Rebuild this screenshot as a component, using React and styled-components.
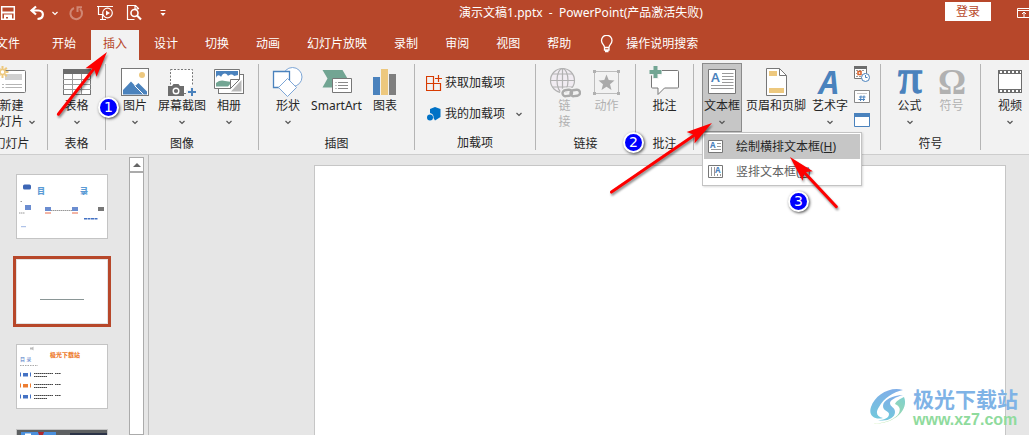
import React, { useState } from "react";
import styled, { createGlobalStyle, css } from "styled-components";

const brand = "#b7472a";
const blue = "#4a82bd";
const green = "#72a593";
const sand = "#edc87e";
const grey = "#6d6d6d";
const faded = "#b1b1b1";

const GlobalStyle = createGlobalStyle`
  * {
    box-sizing: border-box;
  }
  body {
    margin: 0;
    overflow: hidden;
    font-family: "Noto Sans", "Noto Sans CJK SC", sans-serif;
    font-size: 12px;
    line-height: 16px;
    color: #262626;
  }
  button {
    font: inherit;
    color: inherit;
    border: 0;
    padding: 0;
    background: none;
    cursor: pointer;
  }
  svg {
    display: block;
    flex: none;
  }
`;

const Page = styled.div`
  position: relative;
  display: flex;
  flex-direction: column;
  height: 100vh;
  overflow: hidden;
  background: #e6e6e6;
`;

const Header = styled.header`
  background: ${brand};
  color: #fff;
`;

const TitleBar = styled.div`
  display: flex;
  align-items: center;
  height: 26px;
`;

const QuickAccess = styled.div`
  display: flex;
  margin-left: -7px;
`;

const QuickButton = styled.button`
  display: flex;
  justify-content: ${({ $narrow }) => ($narrow ? "flex-start" : "center")};
  align-items: center;
  width: ${({ $narrow }) => ($narrow ? "10px" : "29px")};
  height: 24px;
  opacity: ${({ disabled }) => (disabled ? 0.35 : 1)};
`;

const DocTitle = styled.h1`
  flex: 1;
  margin: 0;
  padding-left: 40px;
  font-size: 12px;
  font-weight: 400;
  text-align: center;
  white-space: pre;
`;

const LoginButton = styled.button`
  width: 46px;
  height: 19px;
  margin: 0 26px 3px 0;
  background: #fff;
  color: ${brand};
`;

const WindowButton = styled.button`
  width: 12px;
  overflow: hidden;
`;

const Tabs = styled.nav`
  display: flex;
  gap: 3px;
  height: 34px;
  margin-left: -16px;
  padding-top: 4px;
`;

const Tab = styled.button`
  flex: none;
  padding: ${({ $file }) => ($file ? "0 17px 3px 12px" : "0 12px 3px")};
  ${({ $active }) =>
    $active &&
    css`
      background: #f2f2f2;
      color: ${brand};
    `}
`;

const TellMe = styled.button`
  display: flex;
  align-items: center;
  gap: 12px;
  margin-left: 14px;
  padding-bottom: 3px;
`;

const Ribbon = styled.div`
  display: flex;
  margin-left: -24px;
  padding: 3px 0;
  background: #f2f2f2;
  border-bottom: 1px solid #cdcdcd;
`;

const Group = styled.section`
  display: flex;
  flex-direction: column;
  flex: ${({ $width }) => ($width ? `0 0 ${$width}px` : "1 0 60px")};
  height: 88px;
  padding-left: ${({ $width }) => ($width ? 0 : "9px")};
  background: ${({ $width }) =>
    $width ? "linear-gradient(#b5b5b5, #b5b5b5) right 1px / 1px 86px no-repeat" : "none"};
`;

const GroupBody = styled.div`
  display: flex;
  justify-content: ${({ $start }) => ($start ? "flex-start" : "center")};
  gap: ${({ $gap }) => $gap || 1}px;
  height: 69px;
  padding-right: 1px;
`;

const GroupLabel = styled.div`
  padding-top: 4px;
  padding-right: 1px;
  text-align: center;
`;

const BigButton = styled.button`
  display: flex;
  flex-direction: column;
  align-items: center;
  flex: none;
  min-width: 40px;
  height: 69px;
  padding: 2px 1px 0;
  border: 1px solid transparent;
  white-space: nowrap;
  color: ${({ disabled }) => (disabled ? faded : "inherit")};
  ${({ $pressed }) =>
    $pressed &&
    css`
      background: #c6c6c6;
      border-color: #8b8b8b;
    `}
`;

const ButtonText = styled.span`
  display: flex;
  align-items: center;
  gap: 4px;
  height: 16px;
`;

const CommandList = styled.div`
  display: flex;
  flex-direction: column;
  align-items: flex-start;
  flex: 1;
  gap: 14px;
  padding: 11px 0 0 11px;
`;

const Command = styled.button`
  display: flex;
  align-items: center;
  gap: 3px;
  height: 17px;
`;

const CommandArrow = styled.span`
  padding-left: 7px;
`;

const IconColumn = styled.div`
  display: flex;
  flex-direction: column;
  gap: 7px;
  padding: 3px 2px 0;
`;

const IconButton = styled.button`
  height: 16px;
`;

const MenuAnchor = styled.div`
  position: relative;
`;

const Menu = styled.div`
  position: absolute;
  z-index: 2;
  top: 69px;
  left: 0;
  width: 160px;
  padding: 1px;
  background: #fff;
  border: 1px solid #c3c3c3;
  box-shadow: 1px 1px 2px rgba(0, 0, 0, 0.15);
`;

const MenuItem = styled.button`
  display: flex;
  align-items: center;
  gap: 12px;
  width: 100%;
  height: 25px;
  padding-left: 4px;
  white-space: nowrap;
  color: ${({ $active }) => ($active ? "#262626" : "#5f5f5f")};
  background: ${({ $active }) => ($active ? "#c6c6c6" : "#fff")};
`;

const Workspace = styled.main`
  display: flex;
  flex: 1;
  min-height: 0;
`;

const SlidePane = styled.aside`
  display: flex;
  width: 149px;
  padding-top: 2px;
  border-right: 1px solid #bdbdbd;
`;

const SlideList = styled.div`
  display: flex;
  flex-direction: column;
  flex: 1;
  gap: 20px;
  padding: 17px 0 0 16px;
  overflow: hidden;
`;

const Thumb = styled.button`
  flex: none;
  width: 92px;
  height: 65px;
  background: #fff;
  border: 1px solid ${({ $active }) => ($active ? "#e3e3e3" : "#c4c4c4")};
  outline: ${({ $active }) => ($active ? `3px solid ${brand}` : "none")};
`;

const ScrollTrack = styled.div`
  width: 15px;
  margin-right: 4px;
  background: #fff;
  border: 1px solid #ababab;
`;

const ScrollUp = styled.button`
  display: flex;
  justify-content: center;
  align-items: center;
  width: 100%;
  height: 15px;
  border-bottom: 2px solid #ababab;
`;

const Stage = styled.div`
  flex: 1;
  padding: 10px 23px 0 165px;
`;

const Slide = styled.div`
  height: 100%;
  background: #fff;
  border: 1px solid #c6c6c6;
  border-bottom: 0;
`;

const Arrows = styled.svg`
  position: absolute;
  z-index: 3;
  top: 0;
  left: 0;
  pointer-events: none;
  filter: drop-shadow(1px 2px 1px rgba(0, 0, 0, 0.45));
`;

const Badge = styled.span`
  position: absolute;
  z-index: 4;
  left: ${({ $x }) => $x}px;
  top: ${({ $y }) => $y}px;
  width: 21px;
  height: 21px;
  border: 2px solid #fff;
  border-radius: 50%;
  background: #0000fe;
  color: #fff;
  font: 14px/17px "DejaVu Sans", sans-serif;
  text-align: center;
  box-shadow: 1px 1px 3px rgba(0, 0, 0, 0.7);
`;

const Watermark = styled.div`
  position: absolute;
  right: 11px;
  bottom: 5px;
  display: flex;
  align-items: center;
  gap: 1px;
`;

const WatermarkName = styled.div`
  color: #7fb3e6;
  font: 700 21px/24px "Noto Sans CJK SC", sans-serif;
`;

const WatermarkSite = styled.div`
  color: #8fdb9d;
  font: 700 16px/20px "Liberation Sans", sans-serif;
`;

function Chevron({ color = "#555" }) {
  return (
    <svg width="8" height="6" viewBox="0 0 8 6" fill="none" stroke={color} strokeWidth="1.2">
      <path d="M1.500 2 4 4.500l2.500-2.500" />
    </svg>
  );
}

function Icon({ size = 32, height, children }) {
  return (
    <svg width={size} height={height || size} viewBox={`0 0 ${size} ${height || size}`} fill="none">
      {children}
    </svg>
  );
}

const icons = {
  newSlide: (
    <Icon>
      <rect x="3.5" y="4.5" width="27" height="22" rx="1" fill="#fff" stroke="#777" />
      <path d="M10 8h17v6H10z" fill="#d0d0d0" />
      <path d="M7 18.500h2m1.500 0H27M7 21.500h2m1.500 0H27" stroke="#b5b5b5" />
      <circle cx="7.500" cy="6" r="2.500" fill="#fff" stroke={sand} strokeWidth="1.500" />
      <path
        d="M7.500 0v3m0 6v3M1.500 6h3m6 0h3M3.200 1.700l2.100 2.100m4.400 4.400 2.100 2.100m0-8.600L9.700 3.800M5.300 8.200l-2.100 2.100"
        stroke={sand}
        strokeWidth="2"
      />
    </Icon>
  ),
  table: (
    <Icon>
      <rect x="2.500" y="3.500" width="27" height="25" fill="#fff" stroke="#777" />
      <path d="M2 3h28v5H2z" fill={grey} />
      <path d="M2 13.500h28M2 18.500h28M2 23.500h28M11.500 8v20M20.500 8v20" stroke="#9a9a9a" />
    </Icon>
  ),
  picture: (
    <Icon>
      <rect x="2.500" y="2.500" width="27" height="27" fill="#fff" stroke="#777" />
      <circle cx="23" cy="9" r="3" fill={sand} />
      <path d="M4 28.500V24l8-8.500 12.500 13zM16 20l3.500-3 8.500 8.500v3h-3.500z" fill={blue} />
      <path d="m15.500 19.500 9 9" stroke="#fff" />
    </Icon>
  ),
  screenshot: (
    <Icon>
      <rect x="4.500" y="3.500" width="22" height="24" fill="#fff" stroke="#777" strokeDasharray="2 1.500" />
      <path d="M2 20h4l1.500-2h5l1.500 2h4v10H2z" fill={grey} />
      <circle cx="10" cy="25" r="2.800" stroke="#fff" strokeWidth="1.400" />
      <path d="M26 20v12M20 26h12" stroke="#f2f2f2" strokeWidth="4" />
      <path d="M26 22v8M22 26h8" stroke={blue} strokeWidth="2" />
    </Icon>
  ),
  album: (
    <Icon>
      <rect x="5.500" y="8.500" width="25" height="19" fill="#fff" stroke="#777" />
      <path d="M18 25.500 28.500 14v11.500z" fill="#b9b9b9" />
      <path d="M1.500 3.500h25v10l-9 9h-16z" fill="#fff" stroke="#777" />
      <path d="M3 5h22v8l-8 8H3z" fill={blue} />
      <path d="M3 12c1-4 4-3 5-1 2-5 6-4 7-1 2-2 5-2 6 0l4-1v4l-8 8H3z" fill="#fff" />
      <path d="M3 17c3-3 7-3 9-2l7 1-4 4.500H3z" fill={green} />
      <path d="M26.500 13.500h-9v9z" fill="#fff" stroke="#777" />
    </Icon>
  ),
  shapes: (
    <Icon>
      <circle cx="20.500" cy="11" r="9.500" fill="#fff" stroke="#7da6d6" />
      <path d="M1.500 5.500h16v16h-16z" fill="#fff" stroke={blue} strokeWidth="1.300" />
      <path d="m15.500 12.500 9 9-9 9-9-9z" fill="#fff" stroke="#7da6d6" />
    </Icon>
  ),
  smartArt: (
    <Icon>
      <path d="M2.500 4h20l5 8.500-5 9h-20l5-9z" fill={green} />
      <path d="M12.500 12.500h19v14h-19z" fill="#fff" stroke="#777" />
      <path d="M15.500 16.500h1m1.500 0h10m-12.500 3h1m1.500 0h10m-12.500 3h1m1.500 0h10" stroke="#8a8a8a" />
    </Icon>
  ),
  chart: (
    <Icon>
      <path d="M4 11h7v18H4z" fill={blue} />
      <path d="M12 3h7v26h-7z" fill={sand} />
      <path d="M20 8h7v21h-7z" fill="#7f7f7f" />
    </Icon>
  ),
  store: (
    <Icon size={16}>
      <path
        d="M.500 1.500h7v7h-7zM.500 8.500h7v7h-7zM7.500 8.500h7v7h-7zM12.500 0v7M9 3.500h7"
        stroke="#d83b01"
        strokeWidth="1.200"
      />
    </Icon>
  ),
  addIns: (
    <Icon size={16}>
      <path d="m4 3 5-2 5.500 2v8L9 14.500 7.500 12A4.500 4.500 0 0 0 4 7z" fill="#0072c6" />
      <circle cx="4" cy="11.500" r="3" fill="#0072c6" />
    </Icon>
  ),
  link: (
    <Icon>
      <g stroke={faded} strokeWidth="1.200">
        <circle cx="13.500" cy="14.500" r="12" fill="#f1ecf2" />
        <ellipse cx="13.500" cy="14.500" rx="5.500" ry="12" />
        <path d="M13.500 2.500v24M1.500 14.500h24M3.500 8h20M3.500 21h20" />
      </g>
      <g stroke="#f2f2f2" strokeWidth="5">
        <rect x="13.500" y="24" width="9.500" height="6" rx="3" transform="rotate(-8 18 27)" />
        <rect x="21.500" y="24" width="9.500" height="6" rx="3" transform="rotate(-8 26 27)" />
      </g>
      <g stroke="#aaa" strokeWidth="2.400">
        <rect x="13.500" y="24" width="9.500" height="6" rx="3" transform="rotate(-8 18 27)" />
        <rect x="21.500" y="24" width="9.500" height="6" rx="3" transform="rotate(-8 26 27)" />
      </g>
    </Icon>
  ),
  action: (
    <Icon>
      <path d="M3.500 5.500h24v22h-24z" stroke="#bdbdbd" />
      <path d="M2 4h3v3H2zM26 4h3v3h-3zM2 26h3v3H2zM26 26h3v3h-3z" fill={faded} />
      <path
        d="m15.500 8.500 2.200 5.500 5.800.400-4.500 3.800 1.500 5.800-5-3.200-5 3.200 1.500-5.800-4.500-3.800 5.800-.400z"
        fill="#aaa"
      />
    </Icon>
  ),
  comment: (
    <Icon>
      <path
        d="M4 4.500h24.500q1 0 1 1V21q0 1-1 1H15.500l-6.500 6.500V22H3.500q-1 0-1-1V5.500q0-1 1.500-1z"
        fill="#fff"
        stroke="#777"
      />
      <path d="M6.500 0v13M0 6.500h13" stroke="#f2f2f2" strokeWidth="6" />
      <path d="M6.500 0v12M.500 6h12" stroke={green} strokeWidth="4" />
    </Icon>
  ),
  textBox: (
    <Icon>
      <path d="M2.500 3.500h27v24h-27z" fill="#fff" stroke="#777" />
      <text x="5" y="16" fontSize="13" fontWeight="600" fill={blue}>
        A
      </text>
      <path d="M16 7.500h11.500M16 10.500h11.500M16 13.500h11.500M16 16.500h11.500M5 19.500h22.500M5 22.500h22.500" stroke="#9a9a9a" />
    </Icon>
  ),
  headerFooter: (
    <Icon>
      <path d="M6.500 2.500h13l7 7v20h-20z" fill="#fff" stroke="#777" />
      <path d="M19.500 2.500v7h7" stroke="#777" />
      <path d="M9 5h8v5H9zM9 22h15v5H9z" fill={sand} />
    </Icon>
  ),
  wordArt: (
    <Icon>
      <text x="5" y="28" fontSize="32" fontWeight="700" fontStyle="italic" fill={blue}>
        A
      </text>
    </Icon>
  ),
  dateTime: (
    <Icon size={16}>
      <path d="M.500 1.500h12v11H.500z" fill="#fff" stroke="#777" />
      <path d="M0 0h13v3H0z" fill={grey} />
      <path d="M2 4.500h9M2 7.500h1m7 0h1M2 10.500h5" stroke="#999" strokeDasharray="2 1" />
      <path d="M4 5.500h3v3H4z" fill="#fff" stroke="#d9622b" strokeWidth="1.500" />
      <circle cx="11.500" cy="11.500" r="4" fill="#fff" stroke={blue} />
      <path d="M11.500 9v2.500h2" stroke={blue} />
    </Icon>
  ),
  slideNumber: (
    <Icon size={16}>
      <path d="M.500 1.500h15v12H.500z" fill="#fff" stroke="#888" />
      <path d="M3 4.500h10" stroke="#c8c8c8" />
      <path d="M7 6.500 6.500 12M10 6.500 9.500 12M5 8h6.500M4.500 10.500H11" stroke={blue} />
    </Icon>
  ),
  object: (
    <Icon size={16}>
      <path d="M.500 1.500h15v13H.500z" fill="#fff" stroke={blue} />
      <path d="M0 1h16v4H0z" fill={blue} />
    </Icon>
  ),
  equation: (
    <Icon>
      <text
        x="16"
        y="27"
        textAnchor="middle"
        fontFamily="Liberation Serif"
        fontSize="48"
        fill={blue}
        stroke={blue}
        strokeWidth="1.300"
      >
        π
      </text>
    </Icon>
  ),
  symbol: (
    <Icon>
      <text x="16" y="28" textAnchor="middle" fontFamily="Liberation Serif" fontSize="35" fontWeight="700" fill={faded}>
        Ω
      </text>
    </Icon>
  ),
  video: (
    <Icon>
      <path d="M4.500 4.500h23v22h-23z" fill="#fff" stroke={grey} />
      <path d="M4 4h24v4H4zM4 23h24v4H4z" fill={grey} />
      <path d="M6 6h21M6 25h21" stroke="#fff" strokeWidth="2" strokeDasharray="2 2" />
    </Icon>
  ),
  horizontalBox: (
    <Icon size={16}>
      <path d="M.500 1.500h14v12H.500z" fill="#fff" stroke="#777" />
      <text x="2" y="9" fontSize="8" fontWeight="700" fill={blue}>
        A
      </text>
      <path d="M9 4.500h4M9 7.500h4M3 10.500h10" stroke="#999" />
    </Icon>
  ),
  verticalBox: (
    <Icon size={16}>
      <path d="M.500 1.500h14v12H.500z" fill="#fff" stroke="#777" />
      <text x="7" y="9" fontSize="8" fontWeight="700" fill={blue}>
        A
      </text>
      <path d="M3.500 3v9M6.500 3v9M9.500 10v2M12.500 10v2" stroke="#999" />
    </Icon>
  ),
};

function Big({ icon, lines, arrow, ...rest }) {
  const [first, second] = lines;
  return (
    <BigButton {...rest}>
      {icons[icon]}
      <ButtonText>{first}</ButtonText>
      {(second || arrow) && (
        <ButtonText>
          {second}
          {arrow && <Chevron />}
        </ButtonText>
      )}
    </BigButton>
  );
}

function QuickTools() {
  return (
    <QuickAccess>
      <QuickButton aria-label="保存">
        <svg width="16" height="16" viewBox="0 0 16 16" fill="none" stroke="#fff" strokeWidth="1.500">
          <path d="M1.700 1.700h12.600v12.600H1.700z" />
          <path d="M2 7.500h12" strokeWidth="2" />
          <path d="M4 9.500h8V14h-4v-2H6v2H4z" fill="#fff" stroke="none" />
        </svg>
      </QuickButton>
      <QuickButton aria-label="撤消">
        <svg width="16" height="16" viewBox="0 0 16 16" fill="none" stroke="#fff" strokeWidth="2.200">
          <path d="M7 1.500 2.500 5.500 7 9.500M3 5.500h6.500c6 0 6 8-1 8.500" />
        </svg>
      </QuickButton>
      <QuickButton $narrow aria-label="撤消列表">
        <Chevron color="#fff" />
      </QuickButton>
      <QuickButton aria-label="恢复" disabled>
        <svg width="16" height="16" viewBox="0 0 16 16" fill="none" stroke="#fff" strokeWidth="2">
          <path d="M6 3a5.800 5.800 0 1 0 6 1M9.500 7V2.200H14" />
        </svg>
      </QuickButton>
      <QuickButton aria-label="从头开始">
        <svg width="18" height="16" viewBox="0 0 18 16" fill="none" stroke="#fff" strokeWidth="1.200">
          <path d="M1 1.500h16M2.500 2v7.500H7M6.500 10v4.500M4 14.500h6" />
          <circle cx="11.500" cy="8" r="4.800" />
          <path d="M10 5.500v5L14 8z" fill="#fff" stroke="none" />
        </svg>
      </QuickButton>
      <QuickButton aria-label="打印预览">
        <svg width="16" height="16" viewBox="0 0 16 16" fill="none" stroke="#fff" strokeWidth="1.200">
          <path d="M12.500 4V3.500l-3-3h-8v14h7M9 .500V4h3.500" />
          <circle cx="8.500" cy="8" r="3.500" strokeWidth="1.600" />
          <path d="m11 10.500 4 4" strokeWidth="2.200" />
        </svg>
      </QuickButton>
      <QuickButton aria-label="自定义快速访问工具栏">
        <svg width="6" height="8" viewBox="0 0 6 8" fill="#fff">
          <path d="M.500 1h5v1h-5zM.500 4h5L3 7z" />
        </svg>
      </QuickButton>
    </QuickAccess>
  );
}

const tabNames = ["文件", "开始", "插入", "设计", "切换", "动画", "幻灯片放映", "录制", "审阅", "视图", "帮助"];

function TextBoxMenu() {
  return (
    <MenuAnchor>
      <Big icon="textBox" lines={["文本框"]} arrow $pressed aria-expanded="true" />
      <Menu role="menu">
        <MenuItem role="menuitem" $active>
          {icons.horizontalBox}
          <span>
            绘制横排文本框(<u>H</u>)
          </span>
        </MenuItem>
        <MenuItem role="menuitem">
          {icons.verticalBox}
          <span>
            竖排文本框(<u>V</u>)
          </span>
        </MenuItem>
      </Menu>
    </MenuAnchor>
  );
}

function AgendaThumb() {
  return (
    <svg width="90" height="63" viewBox="0 0 90 63">
      <rect x="6" y="9.500" width="8" height="5" rx="1.500" fill="#3d66b5" />
      <g fontSize="8" fontWeight="900" fill="#5b9bd5">
        <text x="20" y="19">
          目
        </text>
        <text x="63" y="19">
          录
        </text>
      </g>
      <path d="M8 30h6v5H8zM28 32h6v4h-6zM55 32h6v4h-6z" fill="#6b8dd0" />
      <path d="M28 37h6v2h-6zM55 37h6v2h-6z" fill="#f3b5a5" />
      <path d="M81 32h6v4h-6z" fill="#777" />
      <path d="M34 35.500h21M2 38h6M3.500 26.500h2" stroke="#999" strokeDasharray="1.500 .500" />
      <path d="M67 43.700h14" stroke="#4472c4" strokeWidth="1.500" strokeDasharray="3 .500" />
      <path d="M4 51.700h5" stroke="#9db5e3" />
    </svg>
  );
}

function ListThumb() {
  return (
    <svg width="90" height="63" viewBox="0 0 90 63">
      <path d="M13 2.500h2l1.500-1v4l-1.500-1h-2z" fill="#bbb" />
      <text x="33" y="12" fontSize="6" fontWeight="900" fill="#ed7d31">
        极光下载站
      </text>
      <text x="3" y="16" fontSize="5" fill="#4472c4" xmlSpace="preserve">
        目 录
      </text>
      <path d="M3 20.500h18" stroke="#aaa" strokeDasharray="1.500 1" />
      {["#4472c4", "#ed7d31", "#4472c4"].map((color, i) => (
        <g key={i} transform={`translate(0 ${i * 11})`}>
          <path d="M3.500 27.500v4M13.500 27.500v4" stroke={color} />
          <path d="M6 28h5v3.500H6z" fill={color} />
          <path d="M17 28.500h19m2 0h6M17 31.500h13" stroke="#444" strokeWidth="1.200" strokeDasharray="1.600 .400" />
        </g>
      ))}
    </svg>
  );
}

function Swirl() {
  return (
    <svg width="43" height="42" viewBox="0 0 43 42">
      <defs>
        <linearGradient id="sky" x1="0" y1="0" x2="0" y2="1">
          <stop offset="0" stopColor="#7faee8" />
          <stop offset="1" stopColor="#72c8dc" />
        </linearGradient>
        <linearGradient id="leaf" x1="1" y1="0" x2="0" y2="1">
          <stop offset="0" stopColor="#7fcfd0" />
          <stop offset="1" stopColor="#b5e48c" />
        </linearGradient>
      </defs>
      <path d="M34 3C21-1 6 8 2 20c-3 9 4 13 12 11-6-1-8-5-4-11C15 11 24 5 34 3z" fill="url(#sky)" />
      <path
        d="M34 8C24 8 14 13 14 19c0 5 6 5 6 8 0 4-5 6-11 6 9 2 17-2 17-8 0-5-5-5-5-9 0-3 6-6 13-8z"
        fill="url(#sky)"
      />
      <path d="M35 10c5 12-8 27-32 27 14-1 24-5 27-11 2-5 0-7-4-9 1-3 5-5 9-7z" fill="url(#leaf)" />
    </svg>
  );
}

function Arrow({ x, y, angle, length }) {
  return (
    <g transform={`translate(${x} ${y}) rotate(${angle})`}>
      <path d={`M-18 0H-${length}`} stroke="#fe0000" strokeWidth="3" strokeLinecap="round" />
      <path d="M0 0-26 7-21 0l-5-7z" fill="#fe0000" />
    </g>
  );
}

export default function App() {
  const [tab, setTab] = useState("插入");
  const [slide, setSlide] = useState(1);

  return (
    <Page>
      <GlobalStyle />
      <Header>
        <TitleBar>
          <QuickTools />
          <DocTitle>{"演示文稿1.pptx  -  PowerPoint(产品激活失败)"}</DocTitle>
          <LoginButton>登录</LoginButton>
          <WindowButton aria-label="功能区显示选项">
            <svg width="16" height="12" viewBox="0 0 16 12" fill="none" stroke="#fff">
              <path d="M.500 1.500h14v9H.500zM.500 3.500h14M7 10V5M5 7l2-2 2 2" />
            </svg>
          </WindowButton>
        </TitleBar>
        <Tabs>
          {tabNames.map((name) => (
            <Tab key={name} $file={name === "文件"} $active={name === tab} onClick={() => setTab(name)}>
              {name}
            </Tab>
          ))}
          <TellMe>
            <svg width="14" height="18" viewBox="0 0 14 18" fill="none" stroke="#fff" strokeWidth="1.300">
              <path d="M4.500 12.500c0-3-3-3.500-3-7a5.200 5.200 0 0 1 10.500 0c0 3.500-3 4-3 7zM4.500 12.500v2.500H9v-2.500M5 16.500h3.500" />
            </svg>
            操作说明搜索
          </TellMe>
        </Tabs>
      </Header>

      <Ribbon>
        <Group $width={72}>
          <GroupBody>
            <Big icon="newSlide" lines={["新建", "幻灯片"]} arrow />
          </GroupBody>
          <GroupLabel>幻灯片</GroupLabel>
        </Group>
        <Group $width={58}>
          <GroupBody>
            <Big icon="table" lines={["表格"]} arrow />
          </GroupBody>
          <GroupLabel>表格</GroupLabel>
        </Group>
        <Group $width={153}>
          <GroupBody>
            <Big icon="picture" lines={["图片"]} arrow />
            <Big icon="screenshot" lines={["屏幕截图"]} arrow />
            <Big icon="album" lines={["相册"]} arrow />
          </GroupBody>
          <GroupLabel>图像</GroupLabel>
        </Group>
        <Group $width={156}>
          <GroupBody>
            <Big icon="shapes" lines={["形状"]} arrow />
            <Big icon="smartArt" lines={["SmartArt"]} />
            <Big icon="chart" lines={["图表"]} />
          </GroupBody>
          <GroupLabel>插图</GroupLabel>
        </Group>
        <Group $width={121}>
          <GroupBody>
            <CommandList>
              <Command>
                {icons.store}
                获取加载项
              </Command>
              <Command>
                {icons.addIns}
                我的加载项
                <CommandArrow>
                  <Chevron />
                </CommandArrow>
              </Command>
            </CommandList>
          </GroupBody>
          <GroupLabel>加载项</GroupLabel>
        </Group>
        <Group $width={100}>
          <GroupBody $gap={2}>
            <Big icon="link" lines={["链", "接"]} disabled />
            <Big icon="action" lines={["动作"]} disabled />
          </GroupBody>
          <GroupLabel>链接</GroupLabel>
        </Group>
        <Group $width={58}>
          <GroupBody>
            <Big icon="comment" lines={["批注"]} />
          </GroupBody>
          <GroupLabel>批注</GroupLabel>
        </Group>
        <Group $width={187}>
          <GroupBody $gap={2}>
            <TextBoxMenu />
            <Big icon="headerFooter" lines={["页眉和页脚"]} />
            <Big icon="wordArt" lines={["艺术字"]} arrow />
            <IconColumn>
              <IconButton aria-label="日期和时间">{icons.dateTime}</IconButton>
              <IconButton aria-label="幻灯片编号">{icons.slideNumber}</IconButton>
              <IconButton aria-label="对象">{icons.object}</IconButton>
            </IconColumn>
          </GroupBody>
        </Group>
        <Group $width={100}>
          <GroupBody $gap={2}>
            <Big icon="equation" lines={["公式"]} arrow />
            <Big icon="symbol" lines={["符号"]} disabled />
          </GroupBody>
          <GroupLabel>符号</GroupLabel>
        </Group>
        <Group>
          <GroupBody $start>
            <Big icon="video" lines={["视频"]} arrow />
          </GroupBody>
        </Group>
      </Ribbon>

      <Workspace>
        <SlidePane>
          <SlideList>
            <Thumb aria-label="幻灯片 1" $active={slide === 0} onClick={() => setSlide(0)}>
              <AgendaThumb />
            </Thumb>
            <Thumb aria-label="幻灯片 2" $active={slide === 1} onClick={() => setSlide(1)}>
              <svg width="90" height="63" viewBox="0 0 90 63">
                <path d="M23 39.500h44" stroke="#8a9696" />
              </svg>
            </Thumb>
            <Thumb aria-label="幻灯片 3" $active={slide === 2} onClick={() => setSlide(2)}>
              <ListThumb />
            </Thumb>
            <Thumb aria-label="幻灯片 4" $active={slide === 3} onClick={() => setSlide(3)}>
              <svg width="90" height="63" viewBox="0 0 90 63">
                <path d="M0 0h90v63H0z" fill="#5d6062" />
                <path d="M4 2h35v61H4z" fill="#4a8fdc" />
                <path d="M8 3.500h6v2H8z" fill="#fff" />
                <path d="M21 2h6l-1 3h-4z" fill="#b0262c" />
                <path d="M53 3h37v60H53z" fill="#2b3347" />
              </svg>
            </Thumb>
          </SlideList>
          <ScrollTrack>
            <ScrollUp aria-label="向上滚动">
              <svg width="8" height="4" viewBox="0 0 8 4" fill="#666">
                <path d="M0 4h8L4 0z" />
              </svg>
            </ScrollUp>
          </ScrollTrack>
        </SlidePane>
        <Stage>
          <Slide />
        </Stage>
      </Workspace>

      <Arrows width="900" height="230" viewBox="0 0 900 230">
        <Arrow x={107} y={52} angle={-52} length={79} />
        <Arrow x={712} y={123} angle={-34.5} length={122} />
        <Arrow x={790} y={157} angle={-133} length={68} />
      </Arrows>
      <Badge $x={98} $y={97}>
        1
      </Badge>
      <Badge $x={623} $y={132}>
        2
      </Badge>
      <Badge $x={788} $y={191}>
        3
      </Badge>

      <Watermark>
        <Swirl />
        <div>
          <WatermarkName>极光下载站</WatermarkName>
          <WatermarkSite>www.xz7.com</WatermarkSite>
        </div>
      </Watermark>
    </Page>
  );
}
